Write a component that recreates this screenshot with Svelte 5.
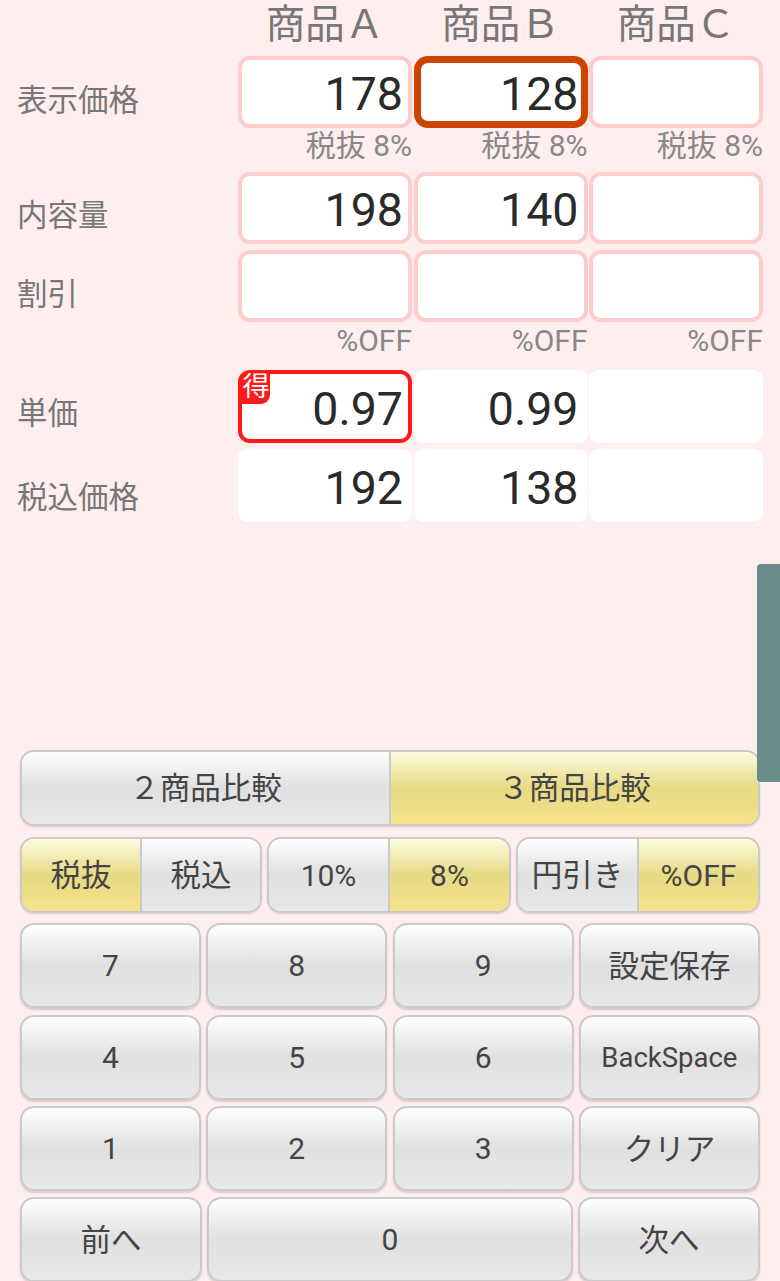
<script>
  const products = ['商品Ａ', '商品Ｂ', '商品Ｃ'];

  const rows = [
    { label: '表示価格', cls: 'price', values: ['178', '128', ''], active: 1, note: '税抜 8%' },
    { label: '内容量', cls: 'amount', values: ['198', '140', ''] },
    { label: '割引', cls: 'discount', values: ['', '', ''], note: '%OFF' },
    { label: '単価', cls: 'unit', values: ['0.97', '0.99', ''], best: 0 },
    { label: '税込価格', cls: 'tax', values: ['192', '138', ''] },
  ];

  const segments = [
    [{ text: '税抜', on: true }, { text: '税込' }],
    [{ text: '10%' }, { text: '8%', on: true }],
    [{ text: '円引き' }, { text: '%OFF', on: true }],
  ];

  const keys = ['7', '8', '9', '設定保存', '4', '5', '6', 'BackSpace', '1', '2', '3', 'クリア'];

  // CJK glyphs sit lower in the line box than the Roboto digits
  const isCjk = (text) => /[^\x00-\x7f]/.test(text);
</script>

<div class="page">
  <div class="table">
    <div class="head-row">
      {#each products as name}
        <div class="head">{name}</div>
      {/each}
    </div>

    {#each rows as row}
      <div class="row {row.cls}">
        <div class="label">{row.label}</div>
        {#each row.values as value, i}
          <div
            class="cell"
            class:input={row.cls === 'price' || row.cls === 'amount' || row.cls === 'discount'}
            class:active={row.active === i}
            class:best={row.best === i}
          >
            {#if row.best === i}<span class="badge">得</span>{/if}
            {value}
          </div>
        {/each}
      </div>
      {#if row.note}
        <div class="note-row note-{row.cls}">
          {#each row.values as _}
            <div class="note">{row.note}</div>
          {/each}
        </div>
      {/if}
    {/each}
  </div>

  <div class="pad">
    <div class="seg seg-wide">
      <button class="cjk">２商品比較</button>
      <button class="cjk on">３商品比較</button>
    </div>

    <div class="seg-row">
      {#each segments as group}
        <div class="seg">
          {#each group as item}
            <button class:on={item.on} class:cjk={isCjk(item.text)}>{item.text}</button>
          {/each}
        </div>
      {/each}
    </div>

    <div class="keys">
      {#each keys as key}
        <button class="key" class:small={key === 'BackSpace'} class:cjk={isCjk(key)}>{key}</button>
      {/each}
    </div>

    <div class="keys-last">
      <button class="key cjk">前へ</button>
      <button class="key">0</button>
      <button class="key cjk">次へ</button>
    </div>
  </div>

  <div class="handle"></div>
</div>

<style>
  :global(body) {
    margin: 0;
    background: #ffeeee;
  }

  .page {
    position: relative;
    width: 780px;
    height: 1281px;
    overflow: hidden;
    background: #ffeeee;
    font-family: Roboto, "Noto Sans CJK JP", sans-serif;
  }

  .table {
    height: 750px;
    box-sizing: border-box;
    padding: 0 17px;
  }

  .head-row,
  .note-row,
  .row {
    display: grid;
    grid-template-columns: 174px 174px 174px;
    column-gap: 1.5px;
    padding-left: 221px;
  }

  .head-row {
    height: 56px;
  }

  .head {
    font-size: 39.5px;
    line-height: 50px;
    color: #777;
    text-align: center;
  }

  .row {
    position: relative;
    height: 72px;
  }

  .row.discount { margin-top: 6px; }
  .row.tax { margin-top: 7px; }

  .label {
    position: absolute;
    left: 0;
    font-size: 30.5px;
    line-height: 44px;
    color: #777;
  }

  .price .label { top: 23px; }
  .amount .label { top: 22px; }
  .discount .label { top: 23px; }
  .unit .label { top: 22px; }
  .tax .label { top: 27px; }

  .cell {
    position: relative;
    box-sizing: border-box;
    height: 73px;
    padding-right: 9px;
    background: #fff;
    border-radius: 9px;
    font-size: 46.5px;
    line-height: 79px;
    color: #2a2a2a;
    text-align: right;
  }

  .cell.input {
    height: 72px;
    border: 4px solid #ffcccc;
    border-radius: 12px;
    line-height: 68px;
    padding-right: 5px;
  }

  .cell.active {
    border: 7px solid #cc4400;
    border-radius: 14px;
    line-height: 62px;
    padding-right: 2px;
  }

  .cell.best {
    border: 4px solid #ff1a1a;
    border-radius: 12px;
    line-height: 71px;
    padding-right: 5px;
  }

  .badge {
    position: absolute;
    left: 0;
    top: 0;
    width: 28px;
    height: 30px;
    background: #ff1a1a;
    border-radius: 0 0 9px 0;
    font-size: 27px;
    line-height: 27px;
    color: #fff;
    text-align: center;
  }

  .note-row {
    height: 44px;
  }

  .note-discount {
    height: 47px;
    padding-top: 1px;
  }

  .note {
    font-size: 30px;
    line-height: 36px;
    color: #888;
    text-align: right;
  }

  .pad {
    display: flex;
    flex-direction: column;
    padding: 0 20px;
  }

  button {
    margin: 0;
    padding: 0;
    font: inherit;
    font-size: 30px;
    color: #444;
    background: linear-gradient(#fefefe, #e0e0e0 50%, #e8e8e8);
    border: 0;
  }

  button.on {
    background: linear-gradient(#fdfbe0, #e6da84 50%, #f6e28c);
  }

  button.cjk {
    padding-bottom: 4px;
    font-size: 30.5px;
  }

  .seg {
    display: flex;
    flex: 1;
    overflow: hidden;
    border: 2px solid #cacaca;
    border-radius: 14px;
    box-shadow: 0 1px 2px rgba(0, 0, 0, 0.15);
  }

  .seg button {
    flex: 1;
    height: 72px;
  }

  .seg button + button {
    border-left: 2px solid #cacaca;
  }

  .seg-wide {
    flex: none;
    height: 76px;
    box-sizing: border-box;
  }

  .seg-row {
    display: grid;
    grid-template-columns: 242px 244px 244px;
    column-gap: 5px;
    margin-top: 11px;
    height: 76px;
  }

  .seg-row .seg {
    height: 76px;
    box-sizing: border-box;
  }

  .keys {
    display: grid;
    grid-template-columns: repeat(4, 181px);
    grid-auto-rows: 85px;
    column-gap: 5.3px;
    row-gap: 6.5px;
    margin-top: 10px;
  }

  .keys-last {
    display: grid;
    grid-template-columns: 182px 1fr 182px;
    column-gap: 5px;
    margin-top: 6px;
    height: 85px;
  }

  .key {
    box-sizing: border-box;
    border: 2px solid #cacaca;
    border-radius: 14px;
    box-shadow: 0 2px 2px rgba(0, 0, 0, 0.15);
  }

  .key.small {
    font-size: 27.5px;
  }

  .handle {
    position: absolute;
    right: 0;
    top: 564px;
    width: 23px;
    height: 218px;
    background: rgba(100, 136, 134, 0.96);
    border-radius: 4px 0 0 4px;
  }
</style>
